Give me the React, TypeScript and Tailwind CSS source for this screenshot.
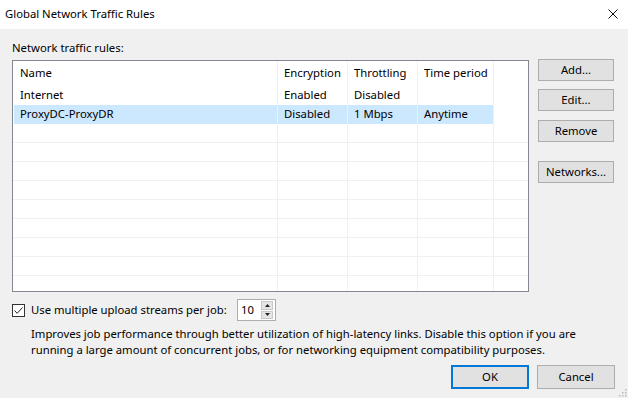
import React from "react";

const columns = [
  { label: "Name", width: "w-[264px]" },
  { label: "Encryption", width: "w-[70px]" },
  { label: "Throttling", width: "w-[70px]" },
  { label: "Time period", width: "w-[76px]" },
];

const rules = [
  { name: "Internet", enc: "Enabled", thr: "Disabled", time: "", selected: false },
  { name: "ProxyDC-ProxyDR", enc: "Disabled", thr: "1 Mbps", time: "Anytime", selected: true },
];

const Row = ({ cells, className }: { cells: string[]; className: string }) => (
  <div className={`flex ${className}`}>
    {columns.map((c, i) => (
      <div
        key={c.label}
        className={`${c.width} shrink-0 flex items-center whitespace-nowrap ${i > 0 ? "border-l border-[#f0f0f0] pl-[6px]" : "pl-[7px]"}`}
      >
        {cells[i]}
      </div>
    ))}
    <div className="flex-1 border-l border-[#f0f0f0]" />
  </div>
);

const DlgButton = ({ children, className = "" }: { children: React.ReactNode; className?: string }) => (
  <button className={`h-[22px] w-[76px] bg-[#e1e1e1] border border-[#adadad] text-black leading-none ${className}`}>
    {children}
  </button>
);

const App = () => {
  return (
    <div
      className="w-[628px] h-[398px] bg-[#f0f0f0] text-[11.3px] text-black relative overflow-hidden flex flex-col"
      style={{ fontFamily: '"Noto Sans", "Open Sans", sans-serif' }}
    >
      <div className="h-[29px] bg-white flex items-center justify-between pl-[5px] pr-[10px] shrink-0">
        <span>Global Network Traffic Rules</span>
        <svg width="10" height="10" viewBox="0 0 10 10" className="mt-[-1px]">
          <path d="M0.5 0.5 L9.5 9.5 M9.5 0.5 L0.5 9.5" stroke="#111" strokeWidth="1" />
        </svg>
      </div>

      <div className="px-[12px] pt-[11px] flex flex-col">
        <div className="h-[16px] leading-[16px]">Network traffic rules:</div>

        <div className="flex mt-[4px]">
          <div className="w-[517px] h-[232px] bg-white border border-[#828790] overflow-hidden">
            <Row cells={columns.map((c) => c.label)} className="h-[25px]" />
            {rules.map((r) => (
              <div key={r.name} className="relative h-[19px]">
                {r.selected && <div className="absolute left-[1px] top-0 h-[19px] w-[479px] bg-[#cce8ff]" />}
                <Row cells={[r.name, r.enc, r.thr, r.time]} className="relative h-[19px]" />
              </div>
            ))}
            {Array.from({ length: 8 }).map((_, i) => (
              <Row key={i} cells={["", "", "", ""]} className="h-[19px] border-b border-[#f0f0f0]" />
            ))}
            <Row cells={["", "", "", ""]} className="h-[20px]" />
          </div>

          <div className="ml-[9px] mt-[-1px] flex flex-col">
            <DlgButton>Add...</DlgButton>
            <DlgButton className="mt-[8px]">Edit...</DlgButton>
            <DlgButton className="mt-[9px]">Remove</DlgButton>
            <DlgButton className="mt-[19px]">Networks...</DlgButton>
          </div>
        </div>

        <div className="flex items-center mt-[7px] h-[22px]">
          <div className="w-[13px] h-[13px] border border-[#333] bg-white flex items-center justify-center">
            <svg width="11" height="11" viewBox="0 0 11 11">
              <path d="M1.5 5.5 L4.2 8.3 L9.5 2.5" fill="none" stroke="#222" strokeWidth="1" />
            </svg>
          </div>
          <span className="ml-[6px] w-[206px] shrink-0">Use multiple upload streams per job:</span>
          <div className="w-[39px] h-[22px] bg-white border border-[#abadb3] flex items-center">
            <span className="pl-[3px] flex-1">10</span>
            <div className="w-[12px] h-[18px] mr-[2px] flex flex-col gap-[1px]">
              <div className="flex-1 bg-[#e5e5e5] border border-[#c8c8c8] flex items-center justify-center">
                <svg width="5" height="3" viewBox="0 0 5 3"><path d="M0 3 L2.5 0 L5 3 Z" fill="#222" /></svg>
              </div>
              <div className="flex-1 bg-[#e5e5e5] border border-[#c8c8c8] flex items-center justify-center">
                <svg width="5" height="3" viewBox="0 0 5 3"><path d="M0 0 L2.5 3 L5 0 Z" fill="#222" /></svg>
              </div>
            </div>
          </div>
        </div>

        <p className="pl-[19px] mt-[5px] leading-[16px]">
          Improves job performance through better utilization of high-latency links. Disable this option if you are
          <br />
          running a large amount of concurrent jobs, or for networking equipment compatibility purposes.
        </p>

        <div className="flex justify-end mt-[7px] pr-[1px]">
          <button className="h-[24px] w-[78px] bg-[#e1e1e1] border-2 border-[#0078d7]">OK</button>
          <button className="h-[24px] w-[78px] ml-[8px] bg-[#e1e1e1] border border-[#adadad]">Cancel</button>
        </div>
      </div>

      <svg width="10" height="10" viewBox="0 0 10 10" className="absolute right-[1px] bottom-[1px]">
        {[
          [8, 2],
          [8, 5],
          [5, 5],
          [8, 8],
          [5, 8],
          [2, 8],
        ].map(([x, y], i) => (
          <rect key={i} x={x} y={y} width="1.5" height="1.5" fill="#b8b8b8" />
        ))}
      </svg>
    </div>
  );
};

export default App;
